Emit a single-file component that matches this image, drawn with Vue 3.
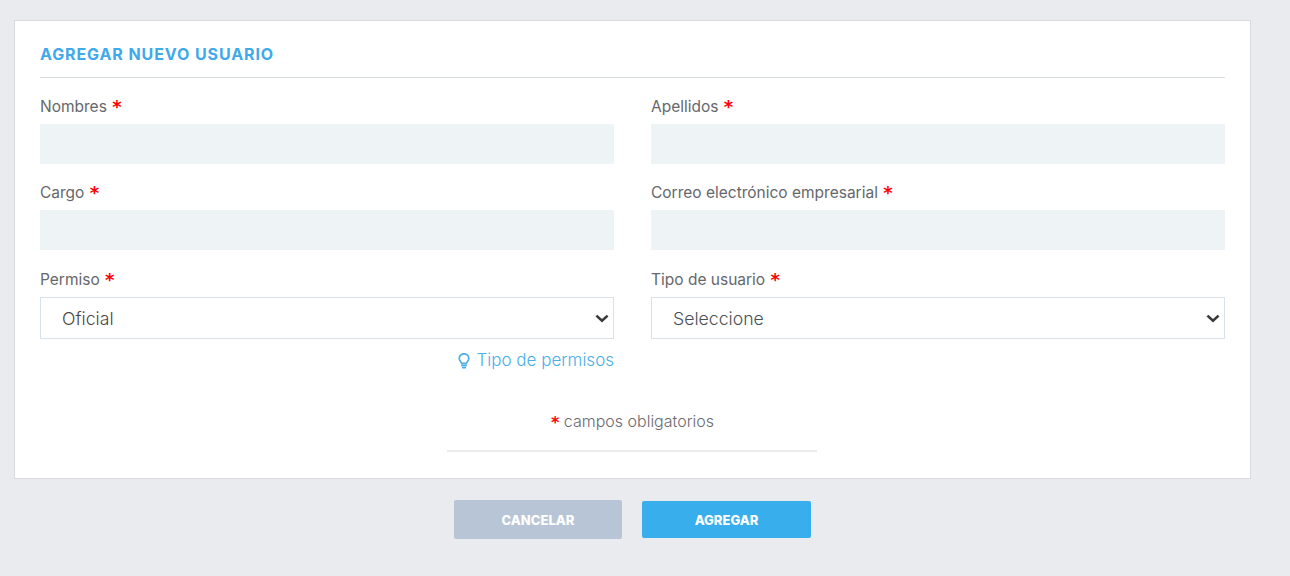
<script setup>
const fields = [
  { label: 'Nombres' },
  { label: 'Apellidos' },
  { label: 'Cargo' },
  { label: 'Correo electrónico empresarial' },
]
</script>

<template>
  <div class="page">
    <section class="card">
      <h1 class="title">AGREGAR NUEVO USUARIO</h1>
      <div class="grid">
        <div v-for="f in fields" :key="f.label" class="field">
          <label class="label">{{ f.label }} <span class="req">*</span></label>
          <input class="input" type="text" />
        </div>
        <div class="field">
          <label class="label">Permiso <span class="req">*</span></label>
          <div class="select-wrap">
            <select class="select oficial">
              <option>Oficial</option>
            </select>
            <svg class="chev" width="14" height="9" viewBox="0 0 14 9" fill="none" stroke="#3a3a3c" stroke-width="2.6">
              <path d="M1.4 1.6 7 6.8l5.6-5.2" />
            </svg>
          </div>
          <a class="link">
            <svg class="bulb" width="12" height="16" viewBox="0 0 12 16" fill="none" stroke="#4aaee8" stroke-width="1.7">
              <path d="M3.7 10.4C3.3 8.8 1.2 8 1.2 5.6a4.8 4.8 0 0 1 9.6 0C10.8 8 8.7 8.8 8.3 10.4Z" />
              <path d="M3.8 12.4h4.4M4.6 14.6h2.8" stroke-linecap="round" />
            </svg>
            Tipo de permisos
          </a>
        </div>
        <div class="field">
          <label class="label">Tipo de usuario <span class="req">*</span></label>
          <div class="select-wrap">
            <select class="select">
              <option>Seleccione</option>
            </select>
            <svg class="chev" width="14" height="9" viewBox="0 0 14 9" fill="none" stroke="#3a3a3c" stroke-width="2.6">
              <path d="M1.4 1.6 7 6.8l5.6-5.2" />
            </svg>
          </div>
        </div>
      </div>
      <p class="note"><span class="req small">*</span> campos obligatorios</p>
      <hr class="rule" />
    </section>
    <div class="actions">
      <button class="btn cancel" type="button">CANCELAR</button>
      <button class="btn add" type="button">AGREGAR</button>
    </div>
  </div>
</template>

<style>
html, body { margin: 0; background: #e9ebef; }
</style>

<style scoped>
.page {
  box-sizing: border-box;
  width: 1290px;
  height: 576px;
  padding: 20px 39px 0 14px;
  background: #e9ebef;
  font-family: Inter, "Open Sans", sans-serif;
  overflow: hidden;
}
.card {
  box-sizing: border-box;
  height: 459px;
  padding: 25px 25px 0;
  background: #fff;
  border: 1px solid #d8dade;
}
.title {
  box-sizing: content-box;
  margin: 0;
  height: 31px;
  border-bottom: 1px solid #d8dde3;
  color: #3fa9ec;
  font-size: 16px;
  font-weight: 700;
  line-height: 17px;
  letter-spacing: 0.9px;
}
.grid {
  display: grid;
  grid-template-columns: 574px 574px;
  column-gap: 37px;
  row-gap: 19.4px;
  margin-top: 19px;
}
.field {
  display: flex;
  flex-direction: column;
  min-width: 0;
}
.label {
  display: block;
  height: 27px;
  color: #66676b;
  font-size: 15.5px;
  line-height: 20.8px;
}
.req {
  position: relative;
  top: 1px;
  margin-left: 1px;
  color: #f00;
  font-family: "DejaVu Sans", sans-serif;
  font-size: 18px;
  font-weight: 700;
  line-height: 0;
}
.input {
  box-sizing: border-box;
  display: block;
  width: 100%;
  height: 40px;
  border: 0;
  background: #eef3f6;
  outline: none;
}
.select-wrap {
  position: relative;
}
.select {
  box-sizing: border-box;
  display: block;
  width: 100%;
  height: 42px;
  padding: 2px 17px 0 21px;
  border: 1px solid #d7e2ea;
  border-radius: 0;
  background: #fff;
  color: #4a4f57;
  font-family: inherit;
  font-size: 17.7px;
  font-weight: 300;
  outline: none;
  appearance: none;
}
.select.oficial {
  color: #4c4640;
}
.chev {
  position: absolute;
  right: 5px;
  top: 17px;
  pointer-events: none;
}
.link {
  display: flex;
  align-items: center;
  justify-content: flex-end;
  gap: 6px;
  height: 20px;
  margin-top: 11px;
  color: #4aaee8;
  font-size: 17px;
  font-weight: 300;
  line-height: 20px;
}
.bulb {
  margin-top: 3px;
}
.note {
  margin: 41px 0 0;
  height: 20px;
  color: #6b6a70;
  font-size: 16px;
  font-weight: 300;
  line-height: 20px;
  text-align: center;
}
.small {
  margin-left: 0;
  font-size: 16px;
}
.rule {
  box-sizing: border-box;
  width: 370px;
  height: 2px;
  margin: 19px 0 0 407px;
  border: 0;
  background: #ececee;
}
.actions {
  display: flex;
  justify-content: center;
  align-items: center;
  gap: 20px;
  margin-top: 21px;
}
.btn {
  border: 0;
  border-radius: 2px;
  color: #fff;
  font-family: inherit;
  font-size: 13px;
  font-weight: 800;
}
.cancel {
  width: 168px;
  height: 39px;
  background: #b8c5d6;
}
.add {
  width: 169px;
  height: 37px;
  background: #38aeec;
}
</style>
